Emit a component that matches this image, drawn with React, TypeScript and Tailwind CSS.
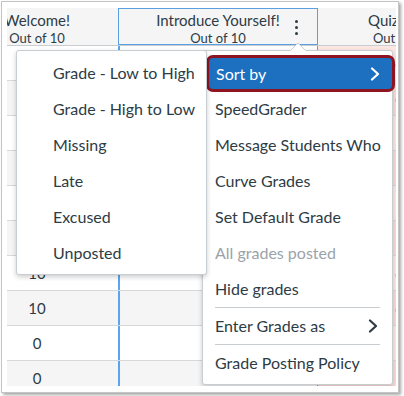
import React from "react";

const rowVals = ["10", "10", "10", "10", "10", "10", "10", "10", "0", "0"];
const quizVals = ["6", "6", "", "", "", "", "6", "6", "", ""];

function Chevron({ color }: { color: string }) {
  return (
    <svg width="10" height="14" viewBox="0 0 10 14" fill="none">
      <polyline points="2,1.5 8,7 2,12.5" stroke={color} strokeWidth="2.2" strokeLinecap="round" strokeLinejoin="round" />
    </svg>
  );
}

export default function App() {
  const subItems = ["Grade - Low to High", "Grade - High to Low", "Missing", "Late", "Excused", "Unposted"];
  return (
    <div className="w-[404px] h-[396px] bg-white font-['Lato',sans-serif] text-[#2d3b45]">
      <div className="ml-[1px] mt-[1px] w-[398px] h-[392px] border border-[#c4c4c4] bg-white shadow-[2px_2px_3px_rgba(0,0,0,0.35)] pl-[5px] pt-[6px]">
        <div className="relative w-[389px] h-[378px] overflow-hidden">
          {/* header */}
          <div className="flex h-[38px] bg-[#f5f5f5] border-b border-[#c7cdd1]">
            <div className="w-[111px] shrink-0">
              <div className="w-[60px] flex flex-col items-center pt-[3px]">
                <div className="whitespace-nowrap text-[15px] leading-[18px]">Welcome!</div>
                <div className="whitespace-nowrap text-[13px] leading-[16px] mt-[1px]">Out of 10</div>
              </div>
            </div>
            <div className="relative w-[200px] shrink-0 border border-[#5b9fe3] flex flex-col items-center pt-[2px]">
              <div className="whitespace-nowrap text-[15px] leading-[18px]">Introduce Yourself!</div>
              <div className="whitespace-nowrap text-[13px] leading-[16px] mt-[1px]">Out of 10</div>
              <div className="absolute right-[19px] top-[11px] flex flex-col gap-[3px]">
                <div className="w-[3px] h-[3px] rounded-full bg-[#2d3b45]" />
                <div className="w-[3px] h-[3px] rounded-full bg-[#2d3b45]" />
                <div className="w-[3px] h-[3px] rounded-full bg-[#2d3b45]" />
              </div>
            </div>
            <div className="flex-1 flex flex-col pt-[3px]">
              <div className="whitespace-nowrap text-[15px] leading-[18px] pl-[50px]">Quiz 1</div>
              <div className="whitespace-nowrap text-[13px] leading-[16px] mt-[1px] pl-[55px]">Out of 10</div>
            </div>
          </div>
          {/* rows */}
          {rowVals.map((v, i) => (
            <div key={i} className={`flex h-[35px] border-b border-[#d5d9dc] ${i % 2 === 1 ? "bg-[#f5f5f5]" : "bg-white"}`}>
              <div className="w-[111px] shrink-0">
                <div className="w-[60px] h-full flex items-center justify-center text-[15px]">{v}</div>
              </div>
              <div className="w-[200px] shrink-0 border-l-2 border-r border-[#5aa6ee]" />
              <div className={`flex-1 flex items-center pl-[77px] text-[15px] ${i % 2 === 1 ? "bg-[#fbdcd6]" : "bg-[#fde7e3]"}`}>{quizVals[i]}</div>
            </div>
          ))}

          {/* main menu */}
          <div className="absolute left-[195px] top-[42px] w-[191px] h-[335px] bg-white border border-[#c7cdd1] rounded-[3px] shadow-[0_2px_5px_rgba(0,0,0,0.2)] pt-[4px] text-[16px]">
            <div className="h-[36px] pt-[3px] pl-[6px] pr-[0px]">
              <div className="h-[31px] rounded-[4px] bg-[#1d6fc0] shadow-[0_0_0_3px_#8d1420] flex items-center justify-between pl-[7px] pr-[12px] text-white">
                <span>Sort by</span>
                <Chevron color="#ffffff" />
              </div>
            </div>
            {["SpeedGrader", "Message Students Who", "Curve Grades", "Set Default Grade"].map((t) => (
              <div key={t} className="h-[36px] flex items-center px-[12px] whitespace-nowrap">{t}</div>
            ))}
            <div className="h-[36px] flex items-center px-[12px] text-[#9aa3a9]">All grades posted</div>
            <div className="h-[36px] flex items-center px-[12px]">Hide grades</div>
            <div className="h-px mx-[12px] bg-[#c7cdd1]" />
            <div className="h-[36px] flex items-center justify-between pl-[12px] pr-[14px]">
              <span>Enter Grades as</span>
              <Chevron color="#2d3b45" />
            </div>
            <div className="h-px mx-[12px] bg-[#c7cdd1]" />
            <div className="h-[36px] flex items-center px-[12px]">Grade Posting Policy</div>
          </div>

          {/* caret */}
          <svg className="absolute left-[283px] top-[34px]" width="16" height="9" viewBox="0 0 16 9">
            <polygon points="0,9 8,1 16,9" fill="#ffffff" />
            <polyline points="0.5,8.5 8,1 15.5,8.5" fill="none" stroke="#c7cdd1" strokeWidth="1" />
          </svg>

          {/* submenu */}
          <div className="absolute left-[9px] top-[42px] w-[191px] h-[225px] bg-white border border-[#c7cdd1] rounded-[3px] shadow-[0_2px_5px_rgba(0,0,0,0.2)] pt-[4px] text-[16px]">
            {subItems.map((t) => (
              <div key={t} className="h-[36px] flex items-center pl-[36px] whitespace-nowrap">{t}</div>
            ))}
          </div>
        </div>
      </div>
    </div>
  );
}
